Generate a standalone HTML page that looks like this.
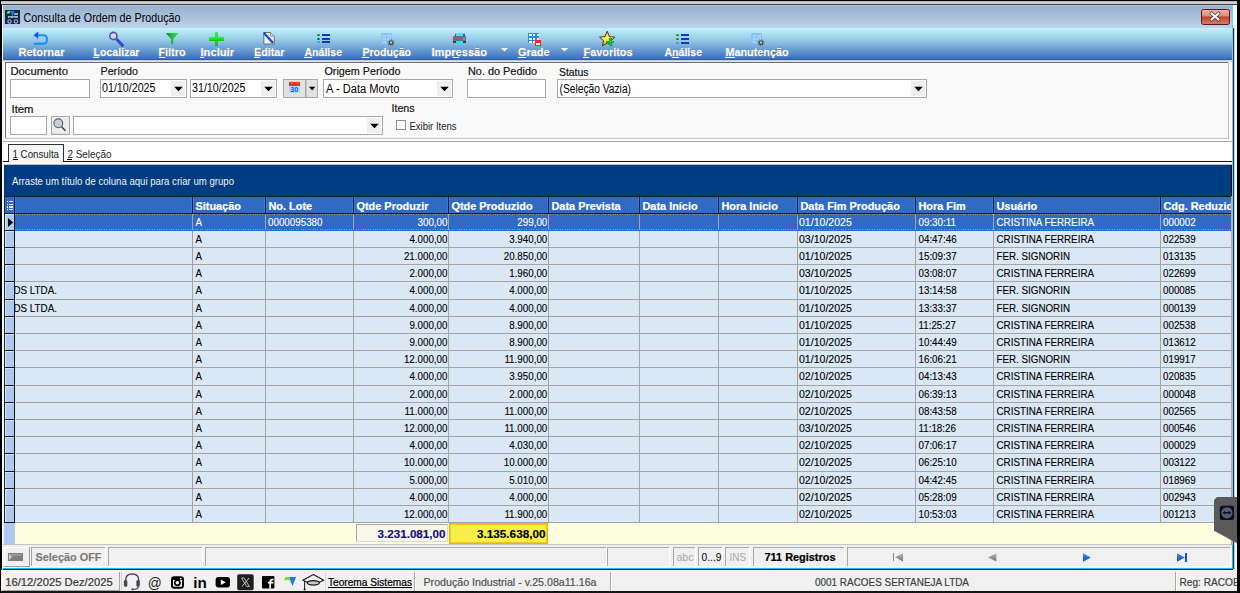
<!DOCTYPE html>
<html><head><meta charset="utf-8"><title>Consulta de Ordem de Produção</title>
<style>html,body{margin:0;padding:0;background:#000;overflow:hidden}svg{display:block}rect{shape-rendering:crispEdges}rect[rx]{shape-rendering:auto}text{font-family:"Liberation Sans",sans-serif;white-space:pre}</style>
</head><body><svg width="1240" height="593" viewBox="0 0 1240 593">
<defs><linearGradient id="gTitle" x1="0" y1="0" x2="0" y2="1"><stop offset="0" stop-color="#95afcd"/><stop offset="1" stop-color="#bed2ea"/></linearGradient><linearGradient id="gTool" x1="0" y1="0" x2="0" y2="1"><stop offset="0" stop-color="#c2f2fc"/><stop offset="0.4" stop-color="#94c8e6"/><stop offset="1" stop-color="#3a70be"/></linearGradient><linearGradient id="gClose" x1="0" y1="0" x2="0" y2="1"><stop offset="0" stop-color="#eeb4a4"/><stop offset="0.42" stop-color="#de8c76"/><stop offset="0.5" stop-color="#c2442c"/><stop offset="1" stop-color="#dc7e66"/></linearGradient><linearGradient id="gPlus" x1="0" y1="0" x2="0" y2="1"><stop offset="0" stop-color="#30f050"/><stop offset="1" stop-color="#10c020"/></linearGradient><linearGradient id="gFun" x1="0" y1="0" x2="1" y2="0"><stop offset="0" stop-color="#0c9030"/><stop offset="1" stop-color="#40e850"/></linearGradient><linearGradient id="gStar" x1="0" y1="0" x2="0" y2="1"><stop offset="0" stop-color="#f8c020"/><stop offset="0.5" stop-color="#fff060"/><stop offset="1" stop-color="#f0b020"/></linearGradient><linearGradient id="gNavG" x1="0" y1="0" x2="0" y2="1"><stop offset="0" stop-color="#b8b8b8"/><stop offset="1" stop-color="#707070"/></linearGradient><linearGradient id="gNavB" x1="0" y1="0" x2="0" y2="1"><stop offset="0" stop-color="#4a90f0"/><stop offset="1" stop-color="#0a48c8"/></linearGradient><filter id="sh" x="-5%" y="-40%" width="110%" height="180%"><feMorphology in="SourceAlpha" operator="dilate" radius="0.6"/><feGaussianBlur stdDeviation="0.5"/><feComponentTransfer><feFuncA type="linear" slope="0.55"/></feComponentTransfer><feFlood flood-color="#0a2860"/><feComposite operator="in" in2="SourceAlpha"/></filter></defs>
<rect x="0" y="0" width="1240" height="593" fill="#000"/>
<rect x="1" y="1" width="1236" height="3" fill="#cfcfcf"/>
<rect x="1" y="1" width="1236" height="1" fill="#b8b8b8"/>
<rect x="1" y="4" width="1236" height="1" fill="#3c3c3c"/>
<rect x="2" y="5" width="1" height="565" fill="#f2f8fc"/>
<rect x="1233" y="5" width="4" height="565" fill="#f8f8f8"/>
<rect x="1234" y="28" width="1" height="541" fill="#d0c8c8"/>
<rect x="1232" y="5" width="1" height="564" fill="#70d0f4"/>
<rect x="1233" y="28" width="1" height="541" fill="#183848"/>
<rect x="3" y="5" width="1229" height="23" fill="url(#gTitle)"/>
<rect x="3" y="5" width="1229" height="1" fill="#b4c8dc"/>
<rect x="5" y="10" width="15" height="14" fill="#0a2a50"/>
<path d="M6.3 13.4 L7.9 10.9 L11 10.9 L9.4 13.4 Z" fill="#8ee020"/>
<path d="M10.2 11 L14.6 11 L12.3 16.9 L11.4 13.6 Z" fill="#1a7ae0"/>
<rect x="14" y="13" width="4" height="2" fill="#9aa6b2"/>
<rect x="8" y="16" width="10" height="2" fill="#a4aebb"/>
<rect x="9" y="17" width="2" height="1" fill="#6a7888"/>
<rect x="13" y="17" width="2" height="1" fill="#6a7888"/>
<circle cx="9.5" cy="21.4" r="1.7" fill="none" stroke="#a8b2bc" stroke-width="1.1"/>
<circle cx="16" cy="21.4" r="1.7" fill="none" stroke="#a8b2bc" stroke-width="1.1"/>
<text x="23.5" y="22" font-size="12" fill="#000" textLength="157.0" lengthAdjust="spacingAndGlyphs">Consulta de Ordem de Produção</text>
<rect x="1201.5" y="9.5" width="28" height="15" rx="2" fill="url(#gClose)" stroke="#5a1a1a"/>
<path d="M1211.5 13.5 L1218.5 19.5 M1218.5 13.5 L1211.5 19.5" stroke="#404040" stroke-width="3.6" stroke-linecap="round"/>
<path d="M1211.5 13.5 L1218.5 19.5 M1218.5 13.5 L1211.5 19.5" stroke="#f4f4f4" stroke-width="2.2" stroke-linecap="round"/>
<rect x="3" y="28" width="1229" height="31" fill="url(#gTool)"/>
<rect x="3" y="59" width="1229" height="1" fill="#2a5eae"/>
<rect x="3" y="60" width="1229" height="1" fill="#c4d2e4"/>
<rect x="3" y="61" width="1229" height="1" fill="#e2ded6"/>
<g filter="url(#sh)">
<text x="18.5" y="56" font-size="10" fill="#000" font-weight="bold" textLength="46.0" lengthAdjust="spacingAndGlyphs" stroke="#000" stroke-width="0.4">Retornar</text>
</g>
<text x="18.5" y="56" font-size="10" fill="#fff" font-weight="bold" textLength="46.0" lengthAdjust="spacingAndGlyphs" stroke="#fff" stroke-width="0.3">Retornar</text>
<g filter="url(#sh)">
<text x="93.5" y="56" font-size="10" fill="#000" font-weight="bold" textLength="46.0" lengthAdjust="spacingAndGlyphs" stroke="#000" stroke-width="0.4">Localizar</text>
</g>
<text x="93.5" y="56" font-size="10" fill="#fff" font-weight="bold" textLength="46.0" lengthAdjust="spacingAndGlyphs" stroke="#fff" stroke-width="0.3">Localizar</text>
<rect x="93" y="57" width="6" height="1" fill="#fff"/>
<g filter="url(#sh)">
<text x="158.5" y="56" font-size="10" fill="#000" font-weight="bold" textLength="27.0" lengthAdjust="spacingAndGlyphs" stroke="#000" stroke-width="0.4">Filtro</text>
</g>
<text x="158.5" y="56" font-size="10" fill="#fff" font-weight="bold" textLength="27.0" lengthAdjust="spacingAndGlyphs" stroke="#fff" stroke-width="0.3">Filtro</text>
<rect x="158.5" y="57" width="6" height="1" fill="#fff"/>
<g filter="url(#sh)">
<text x="200.5" y="56" font-size="10" fill="#000" font-weight="bold" textLength="33.5" lengthAdjust="spacingAndGlyphs" stroke="#000" stroke-width="0.4">Incluir</text>
</g>
<text x="200.5" y="56" font-size="10" fill="#fff" font-weight="bold" textLength="33.5" lengthAdjust="spacingAndGlyphs" stroke="#fff" stroke-width="0.3">Incluir</text>
<rect x="200" y="57" width="4" height="1" fill="#fff"/>
<g filter="url(#sh)">
<text x="254" y="56" font-size="10" fill="#000" font-weight="bold" textLength="30.5" lengthAdjust="spacingAndGlyphs" stroke="#000" stroke-width="0.4">Editar</text>
</g>
<text x="254" y="56" font-size="10" fill="#fff" font-weight="bold" textLength="30.5" lengthAdjust="spacingAndGlyphs" stroke="#fff" stroke-width="0.3">Editar</text>
<rect x="253.5" y="57" width="6" height="1" fill="#fff"/>
<g filter="url(#sh)">
<text x="304.5" y="56" font-size="10" fill="#000" font-weight="bold" textLength="37.5" lengthAdjust="spacingAndGlyphs" stroke="#000" stroke-width="0.4">Análise</text>
</g>
<text x="304.5" y="56" font-size="10" fill="#fff" font-weight="bold" textLength="37.5" lengthAdjust="spacingAndGlyphs" stroke="#fff" stroke-width="0.3">Análise</text>
<rect x="304" y="57" width="8" height="1" fill="#fff"/>
<g filter="url(#sh)">
<text x="362.5" y="56" font-size="10" fill="#000" font-weight="bold" textLength="48.5" lengthAdjust="spacingAndGlyphs" stroke="#000" stroke-width="0.4">Produção</text>
</g>
<text x="362.5" y="56" font-size="10" fill="#fff" font-weight="bold" textLength="48.5" lengthAdjust="spacingAndGlyphs" stroke="#fff" stroke-width="0.3">Produção</text>
<rect x="362" y="57" width="7" height="1" fill="#fff"/>
<g filter="url(#sh)">
<text x="431.5" y="56" font-size="10" fill="#000" font-weight="bold" textLength="55.5" lengthAdjust="spacingAndGlyphs" stroke="#000" stroke-width="0.4">Impressão</text>
</g>
<text x="431.5" y="56" font-size="10" fill="#fff" font-weight="bold" textLength="55.5" lengthAdjust="spacingAndGlyphs" stroke="#fff" stroke-width="0.3">Impressão</text>
<rect x="453" y="57" width="6" height="1" fill="#fff"/>
<g filter="url(#sh)">
<text x="518" y="56" font-size="10" fill="#000" font-weight="bold" textLength="31.5" lengthAdjust="spacingAndGlyphs" stroke="#000" stroke-width="0.4">Grade</text>
</g>
<text x="518" y="56" font-size="10" fill="#fff" font-weight="bold" textLength="31.5" lengthAdjust="spacingAndGlyphs" stroke="#fff" stroke-width="0.3">Grade</text>
<rect x="517.5" y="57" width="8" height="1" fill="#fff"/>
<g filter="url(#sh)">
<text x="583.5" y="56" font-size="10" fill="#000" font-weight="bold" textLength="49.0" lengthAdjust="spacingAndGlyphs" stroke="#000" stroke-width="0.4">Favoritos</text>
</g>
<text x="583.5" y="56" font-size="10" fill="#fff" font-weight="bold" textLength="49.0" lengthAdjust="spacingAndGlyphs" stroke="#fff" stroke-width="0.3">Favoritos</text>
<rect x="583" y="57" width="6" height="1" fill="#fff"/>
<g filter="url(#sh)">
<text x="664.5" y="56" font-size="10" fill="#000" font-weight="bold" textLength="37.5" lengthAdjust="spacingAndGlyphs" stroke="#000" stroke-width="0.4">Análise</text>
</g>
<text x="664.5" y="56" font-size="10" fill="#fff" font-weight="bold" textLength="37.5" lengthAdjust="spacingAndGlyphs" stroke="#fff" stroke-width="0.3">Análise</text>
<rect x="672" y="57" width="7" height="1" fill="#fff"/>
<g filter="url(#sh)">
<text x="725.5" y="56" font-size="10" fill="#000" font-weight="bold" textLength="63.0" lengthAdjust="spacingAndGlyphs" stroke="#000" stroke-width="0.4">Manutenção</text>
</g>
<text x="725.5" y="56" font-size="10" fill="#fff" font-weight="bold" textLength="63.0" lengthAdjust="spacingAndGlyphs" stroke="#fff" stroke-width="0.3">Manutenção</text>
<rect x="725" y="57" width="10" height="1" fill="#fff"/>
<path d="M501 48 L508 48 L504.5 51.5 Z" fill="#fff"/>
<path d="M561 48 L568 48 L564.5 51.5 Z" fill="#fff"/>
<path d="M37.5 35.2 L43.3 35.2 Q47 35.2 47 39.5 Q47 43.8 43.3 43.8 L34 43.8" fill="none" stroke="#1a90f4" stroke-width="2"/>
<path d="M33.6 35.2 L38.2 31.6 L38.2 38.8 Z" fill="#0a58f0"/>
<path d="M117 39.8 L122.4 45.2" stroke="#303890" stroke-width="3" stroke-linecap="round"/>
<path d="M117 39.8 L122 44.8" stroke="#3a50e0" stroke-width="1.8" stroke-linecap="round"/>
<circle cx="113.4" cy="36" r="3.6" fill="#d4d4fa" stroke="#505890" stroke-width="1.6"/>
<path d="M165.8 33 L178.6 33 L173.2 39.3 L173.2 44.2 L171.1 44.2 L171.1 39.3 Z" fill="url(#gFun)"/>
<rect x="214.8" y="31.6" width="3.4" height="14.1" fill="url(#gPlus)"/>
<rect x="209" y="36.9" width="15" height="4.2" fill="url(#gPlus)"/>
<path d="M263.8 32.5 L270.5 32.5 L274.2 36.2 L274.2 44 L263.8 44 Z" fill="#f2f2f2" stroke="#6a6a6a" stroke-width="1"/>
<path d="M270.5 32.5 L270.5 36.2 L274.2 36.2" fill="#d0d0d0" stroke="#8a8a8a" stroke-width="0.8"/>
<path d="M264.4 33.4 L272.4 42.2" stroke="#0a40d0" stroke-width="2.2" stroke-linecap="round"/>
<path d="M265 34 L271.8 41.6" stroke="#6c9cf8" stroke-width="0.6" stroke-dasharray="1,1.2"/>
<rect x="317" y="34" width="3" height="2.2" fill="#18c050"/>
<rect x="318" y="34.5" width="1" height="1.2" fill="#065020"/>
<rect x="321.7" y="34" width="8" height="2" fill="#0c3cb0"/>
<rect x="317" y="37.8" width="3" height="2.2" fill="#18c050"/>
<rect x="318" y="38.3" width="1" height="1.2" fill="#065020"/>
<rect x="321.7" y="37.8" width="8" height="2" fill="#0c3cb0"/>
<rect x="317" y="41.4" width="3" height="2" fill="#3aa8f0"/>
<rect x="321.7" y="41.4" width="8" height="2" fill="#0c3cb0"/>
<rect x="676" y="34.2" width="3" height="2.2" fill="#18c050"/>
<rect x="677" y="34.7" width="1" height="1.2" fill="#065020"/>
<rect x="680.7" y="34.2" width="8" height="2" fill="#0c3cb0"/>
<rect x="676" y="38.0" width="3" height="2.2" fill="#18c050"/>
<rect x="677" y="38.5" width="1" height="1.2" fill="#065020"/>
<rect x="680.7" y="38.0" width="8" height="2" fill="#0c3cb0"/>
<rect x="676" y="41.6" width="3" height="2" fill="#3aa8f0"/>
<rect x="680.7" y="41.6" width="8" height="2" fill="#0c3cb0"/>
<rect x="381" y="33" width="11.3" height="10.7" fill="#8cc4f4"/>
<rect x="382.5" y="34.5" width="3.5" height="2.2" fill="#a8d4f8"/>
<rect x="387.3" y="34.5" width="3.5" height="2.2" fill="#a8d4f8"/>
<rect x="382.5" y="37.8" width="3.5" height="2" fill="#a8d4f8"/>
<rect x="387.3" y="37.8" width="3.5" height="2" fill="#a8d4f8"/>
<rect x="382.5" y="40.8" width="3.5" height="2" fill="#a8d4f8"/>
<circle cx="391" cy="42.7" r="2.5" fill="#46525c"/>
<circle cx="391" cy="42.7" r="3.1" fill="none" stroke="#56626c" stroke-width="1" stroke-dasharray="1.1,1.3"/>
<circle cx="391" cy="42.5" r="1" fill="#e0e4e8"/>
<rect x="751" y="33" width="11.3" height="10.7" fill="#8cc4f4"/>
<rect x="752.5" y="34.5" width="3.5" height="2.2" fill="#a8d4f8"/>
<rect x="757.3" y="34.5" width="3.5" height="2.2" fill="#a8d4f8"/>
<rect x="752.5" y="37.8" width="3.5" height="2" fill="#a8d4f8"/>
<rect x="757.3" y="37.8" width="3.5" height="2" fill="#a8d4f8"/>
<rect x="752.5" y="40.8" width="3.5" height="2" fill="#a8d4f8"/>
<circle cx="761" cy="42.7" r="2.5" fill="#46525c"/>
<circle cx="761" cy="42.7" r="3.1" fill="none" stroke="#56626c" stroke-width="1" stroke-dasharray="1.1,1.3"/>
<circle cx="761" cy="42.5" r="1" fill="#e0e4e8"/>
<rect x="455" y="33" width="9.5" height="3.5" fill="#40e8f8"/>
<rect x="455" y="33.5" width="1.3" height="3" fill="#0a60e0"/>
<rect x="463.2" y="33.5" width="1.3" height="3" fill="#0a60e0"/>
<rect x="453" y="36.2" width="13" height="6.4" fill="#6a7078"/>
<rect x="453" y="41.2" width="13" height="1.5" fill="#4a3a38"/>
<rect x="463" y="38" width="1.6" height="1.6" fill="#30b8f8"/>
<rect x="455.7" y="40.5" width="7.5" height="3.5" fill="#30e0f8"/>
<rect x="528" y="33" width="11" height="10.3" fill="#2a88e0"/>
<rect x="529.3" y="34.3" width="2.4" height="2" fill="#f8fcff"/>
<rect x="529.3" y="37.6" width="2.4" height="2" fill="#f8fcff"/>
<rect x="529.3" y="40.9" width="2.4" height="2" fill="#f8fcff"/>
<rect x="533" y="34.3" width="2.4" height="2" fill="#f8fcff"/>
<rect x="533" y="37.6" width="2.4" height="2" fill="#f8fcff"/>
<rect x="533" y="40.9" width="2.4" height="2" fill="#f8fcff"/>
<rect x="536.6" y="34.3" width="2.4" height="2" fill="#f8fcff"/>
<rect x="536.6" y="37.6" width="2.4" height="2" fill="#f8fcff"/>
<rect x="536.6" y="40.9" width="2.4" height="2" fill="#f8fcff"/>
<rect x="535.2" y="40.2" width="5.8" height="5.6" fill="#f02818"/>
<rect x="536.3" y="42.5" width="3.6" height="2" fill="#ffffff"/>
<path d="M607.2 31.2 L609.4 36.6 L614.8 37.2 L610.8 40.8 L612 45.8 L607.2 43 L602.4 45.8 L603.6 40.8 L599.6 37.2 L605 36.6 Z" fill="url(#gStar)" stroke="#3a2000" stroke-width="0.9" stroke-linejoin="round"/>
<rect x="606.2" y="40.6" width="8" height="2.6" fill="#18b030"/>
<rect x="608.9" y="38" width="2.6" height="7.6" fill="#18b030"/>
<rect x="609.5" y="41" width="1.4" height="1.4" fill="#60f070"/>
<rect x="3" y="62" width="1229" height="79" fill="#ffffff"/>
<rect x="3" y="62" width="2" height="79" fill="#f4f4f4"/>
<rect x="5" y="62" width="1224" height="77" fill="#f9f9f9"/>
<rect x="5" y="62" width="1224" height="1" fill="#6e6e6e"/>
<rect x="5" y="62" width="1" height="77" fill="#6e6e6e"/>
<rect x="5" y="138" width="1224" height="1" fill="#c0c0c0"/>
<rect x="1228" y="62" width="1" height="77" fill="#c0c0c0"/>
<rect x="6" y="63" width="1222" height="1" fill="#ffffff"/>
<rect x="6" y="63" width="1" height="75" fill="#ffffff"/>
<rect x="3" y="141" width="1229" height="1" fill="#a8a8a8"/>
<text x="10.5" y="75" font-size="10.6" fill="#141414" textLength="57.5" lengthAdjust="spacingAndGlyphs" stroke="#141414" stroke-width="0.2">Documento</text>
<rect x="10" y="79" width="80" height="19" fill="#fff"/>
<rect x="10" y="79" width="80" height="1" fill="#a8a8a8"/>
<rect x="10" y="79" width="1" height="19" fill="#a8a8a8"/>
<rect x="10" y="97" width="80" height="1" fill="#a8a8a8"/>
<rect x="89" y="79" width="1" height="19" fill="#a8a8a8"/>
<text x="100.5" y="75" font-size="10.6" fill="#141414" textLength="37.5" lengthAdjust="spacingAndGlyphs" stroke="#141414" stroke-width="0.2">Período</text>
<rect x="100" y="79" width="87" height="19" fill="#fff"/>
<rect x="100" y="79" width="87" height="1" fill="#a8a8a8"/>
<rect x="100" y="79" width="1" height="19" fill="#a8a8a8"/>
<rect x="100" y="97" width="87" height="1" fill="#a8a8a8"/>
<rect x="186" y="79" width="1" height="19" fill="#a8a8a8"/>
<rect x="171" y="81" width="14" height="15" fill="#efefef"/>
<path d="M174.2 86.7 L182.8 86.7 L178.5 91.3 Z" fill="#000"/>
<text x="102" y="91.5" font-size="12" fill="#000" textLength="53.5" lengthAdjust="spacingAndGlyphs">01/10/2025</text>
<rect x="190" y="79" width="87" height="19" fill="#fff"/>
<rect x="190" y="79" width="87" height="1" fill="#a8a8a8"/>
<rect x="190" y="79" width="1" height="19" fill="#a8a8a8"/>
<rect x="190" y="97" width="87" height="1" fill="#a8a8a8"/>
<rect x="276" y="79" width="1" height="19" fill="#a8a8a8"/>
<rect x="261" y="81" width="14" height="15" fill="#efefef"/>
<path d="M264.2 86.7 L272.8 86.7 L268.5 91.3 Z" fill="#000"/>
<text x="192" y="91.5" font-size="12" fill="#000" textLength="53.5" lengthAdjust="spacingAndGlyphs">31/10/2025</text>
<rect x="283" y="79" width="35" height="19" fill="#e2e2e2"/>
<rect x="283" y="79" width="35" height="1" fill="#a8a8a8"/>
<rect x="283" y="79" width="1" height="19" fill="#a8a8a8"/>
<rect x="283" y="97" width="35" height="1" fill="#a8a8a8"/>
<rect x="317" y="79" width="1" height="19" fill="#a8a8a8"/>
<rect x="305" y="79" width="1" height="19" fill="#a8a8a8"/>
<rect x="306" y="80" width="1" height="17" fill="#c8c8c8"/>
<rect x="288.8" y="82" width="11" height="3.8" fill="#f03020"/>
<rect x="289" y="85.8" width="11" height="7" fill="#a8dcfa"/>
<rect x="291" y="81" width="1" height="2.5" fill="#80a0c0"/>
<rect x="296.5" y="81" width="1" height="2.5" fill="#80a0c0"/>
<text x="290.3" y="92" font-size="7" fill="#1a60d0" font-weight="bold" textLength="8.0" lengthAdjust="spacingAndGlyphs">30</text>
<path d="M308.9 86.7 L315.3 86.7 L312.1 90.5 Z" fill="#000"/>
<text x="324.5" y="75" font-size="10.6" fill="#141414" textLength="76.0" lengthAdjust="spacingAndGlyphs" stroke="#141414" stroke-width="0.2">Origem Período</text>
<rect x="323" y="79" width="130" height="19" fill="#fff"/>
<rect x="323" y="79" width="130" height="1" fill="#a8a8a8"/>
<rect x="323" y="79" width="1" height="19" fill="#a8a8a8"/>
<rect x="323" y="97" width="130" height="1" fill="#a8a8a8"/>
<rect x="452" y="79" width="1" height="19" fill="#a8a8a8"/>
<rect x="437" y="81" width="14" height="15" fill="#efefef"/>
<path d="M440.2 86.7 L448.8 86.7 L444.5 91.3 Z" fill="#000"/>
<text x="326" y="92.5" font-size="12" fill="#000" textLength="73.5" lengthAdjust="spacingAndGlyphs">A - Data Movto</text>
<text x="468" y="75" font-size="10.6" fill="#141414" textLength="69.0" lengthAdjust="spacingAndGlyphs" stroke="#141414" stroke-width="0.2">No. do Pedido</text>
<rect x="467" y="79" width="79" height="19" fill="#fff"/>
<rect x="467" y="79" width="79" height="1" fill="#a8a8a8"/>
<rect x="467" y="79" width="1" height="19" fill="#a8a8a8"/>
<rect x="467" y="97" width="79" height="1" fill="#a8a8a8"/>
<rect x="545" y="79" width="1" height="19" fill="#a8a8a8"/>
<text x="559" y="76" font-size="10.6" fill="#141414" textLength="29.5" lengthAdjust="spacingAndGlyphs" stroke="#141414" stroke-width="0.2">Status</text>
<rect x="557" y="79" width="370" height="19" fill="#fff"/>
<rect x="557" y="79" width="370" height="1" fill="#a8a8a8"/>
<rect x="557" y="79" width="1" height="19" fill="#a8a8a8"/>
<rect x="557" y="97" width="370" height="1" fill="#a8a8a8"/>
<rect x="926" y="79" width="1" height="19" fill="#a8a8a8"/>
<rect x="911" y="81" width="14" height="15" fill="#efefef"/>
<path d="M914.2 86.7 L922.8 86.7 L918.5 91.3 Z" fill="#000"/>
<text x="559.5" y="92.5" font-size="12" fill="#000" textLength="71.5" lengthAdjust="spacingAndGlyphs">(Seleção Vazia)</text>
<text x="11.5" y="113" font-size="10.6" fill="#141414" textLength="22.0" lengthAdjust="spacingAndGlyphs" stroke="#141414" stroke-width="0.2">Item</text>
<rect x="10" y="116" width="37" height="19" fill="#fff"/>
<rect x="10" y="116" width="37" height="1" fill="#a8a8a8"/>
<rect x="10" y="116" width="1" height="19" fill="#a8a8a8"/>
<rect x="10" y="134" width="37" height="1" fill="#a8a8a8"/>
<rect x="46" y="116" width="1" height="19" fill="#a8a8a8"/>
<rect x="51" y="116" width="19" height="19" fill="#ececec"/>
<rect x="51" y="116" width="19" height="1" fill="#a8a8a8"/>
<rect x="51" y="116" width="1" height="19" fill="#a8a8a8"/>
<rect x="51" y="134" width="19" height="1" fill="#a8a8a8"/>
<rect x="69" y="116" width="1" height="19" fill="#a8a8a8"/>
<rect x="52" y="133" width="17" height="1" fill="#dcdcdc"/>
<path d="M61.6 126.8 L65 130.4" stroke="#46505a" stroke-width="1.6" stroke-linecap="round"/>
<circle cx="58.3" cy="123.3" r="4.4" fill="#c4d2d8" stroke="#5a646c" stroke-width="1.1"/>
<rect x="73" y="116" width="310" height="19" fill="#fff"/>
<rect x="73" y="116" width="310" height="1" fill="#a8a8a8"/>
<rect x="73" y="116" width="1" height="19" fill="#a8a8a8"/>
<rect x="73" y="134" width="310" height="1" fill="#a8a8a8"/>
<rect x="382" y="116" width="1" height="19" fill="#a8a8a8"/>
<rect x="367" y="118" width="14" height="15" fill="#efefef"/>
<path d="M370.2 123.7 L378.8 123.7 L374.5 128.3 Z" fill="#000"/>
<text x="391.5" y="112" font-size="10.6" fill="#141414" textLength="23.0" lengthAdjust="spacingAndGlyphs" stroke="#141414" stroke-width="0.2">Itens</text>
<rect x="396" y="120" width="10" height="10" fill="#fff"/>
<rect x="396" y="120" width="10" height="1" fill="#8e8e8e"/>
<rect x="396" y="120" width="1" height="10" fill="#8e8e8e"/>
<rect x="396" y="129" width="10" height="1" fill="#8e8e8e"/>
<rect x="405" y="120" width="1" height="10" fill="#8e8e8e"/>
<text x="409.5" y="130" font-size="11" fill="#202020" textLength="47.0" lengthAdjust="spacingAndGlyphs">Exibir Itens</text>
<rect x="3" y="142" width="1229" height="22" fill="#ffffff"/>
<rect x="3" y="161" width="1229" height="1" fill="#101010"/>
<rect x="9" y="145" width="54" height="17" fill="#f6f6f6"/>
<rect x="8" y="144" width="56" height="1" fill="#303030"/>
<rect x="8" y="144" width="1" height="17" fill="#303030"/>
<rect x="63" y="144" width="1" height="17" fill="#303030"/>
<text x="12.5" y="157.5" font-size="11" fill="#222" textLength="46.5" lengthAdjust="spacingAndGlyphs">1 Consulta</text>
<rect x="12.5" y="158.5" width="5" height="1.2" fill="#000"/>
<text x="67.5" y="157.5" font-size="11" fill="#222" textLength="44.0" lengthAdjust="spacingAndGlyphs">2 Seleção</text>
<rect x="67" y="158.5" width="5" height="1.2" fill="#000"/>
<rect x="3" y="162" width="1229" height="2" fill="#ffffff"/>
<rect x="3" y="164" width="1229" height="1" fill="#c8c0b8"/>
<rect x="4" y="165" width="1227" height="31" fill="#003c82"/>
<text x="12" y="185" font-size="11" fill="#f4f4f4" textLength="222.0" lengthAdjust="spacingAndGlyphs">Arraste um título de coluna aqui para criar um grupo</text>
<rect x="3" y="162" width="1" height="383" fill="#eef4fa"/>
<rect x="4" y="196" width="1" height="327" fill="#2a2218"/>
<rect x="5" y="197" width="1226" height="16" fill="#316ac5"/>
<rect x="5" y="196" width="1226" height="1" fill="#0a1a38"/>
<rect x="5" y="213" width="1226" height="1" fill="#0a1a38"/>
<rect x="14" y="197" width="1" height="16" fill="#0a1a38"/>
<rect x="13" y="197" width="1" height="16" fill="#3a78d8"/>
<rect x="15" y="197" width="1" height="16" fill="#3a78d8"/>
<rect x="192" y="197" width="1" height="16" fill="#0a1a38"/>
<rect x="191" y="197" width="1" height="16" fill="#3a78d8"/>
<rect x="193" y="197" width="1" height="16" fill="#3a78d8"/>
<rect x="265" y="197" width="1" height="16" fill="#0a1a38"/>
<rect x="264" y="197" width="1" height="16" fill="#3a78d8"/>
<rect x="266" y="197" width="1" height="16" fill="#3a78d8"/>
<rect x="353" y="197" width="1" height="16" fill="#0a1a38"/>
<rect x="352" y="197" width="1" height="16" fill="#3a78d8"/>
<rect x="354" y="197" width="1" height="16" fill="#3a78d8"/>
<rect x="448" y="197" width="1" height="16" fill="#0a1a38"/>
<rect x="447" y="197" width="1" height="16" fill="#3a78d8"/>
<rect x="449" y="197" width="1" height="16" fill="#3a78d8"/>
<rect x="548" y="197" width="1" height="16" fill="#0a1a38"/>
<rect x="547" y="197" width="1" height="16" fill="#3a78d8"/>
<rect x="549" y="197" width="1" height="16" fill="#3a78d8"/>
<rect x="639" y="197" width="1" height="16" fill="#0a1a38"/>
<rect x="638" y="197" width="1" height="16" fill="#3a78d8"/>
<rect x="640" y="197" width="1" height="16" fill="#3a78d8"/>
<rect x="718" y="197" width="1" height="16" fill="#0a1a38"/>
<rect x="717" y="197" width="1" height="16" fill="#3a78d8"/>
<rect x="719" y="197" width="1" height="16" fill="#3a78d8"/>
<rect x="797" y="197" width="1" height="16" fill="#0a1a38"/>
<rect x="796" y="197" width="1" height="16" fill="#3a78d8"/>
<rect x="798" y="197" width="1" height="16" fill="#3a78d8"/>
<rect x="915" y="197" width="1" height="16" fill="#0a1a38"/>
<rect x="914" y="197" width="1" height="16" fill="#3a78d8"/>
<rect x="916" y="197" width="1" height="16" fill="#3a78d8"/>
<rect x="993" y="197" width="1" height="16" fill="#0a1a38"/>
<rect x="992" y="197" width="1" height="16" fill="#3a78d8"/>
<rect x="994" y="197" width="1" height="16" fill="#3a78d8"/>
<rect x="1160" y="197" width="1" height="16" fill="#0a1a38"/>
<rect x="1159" y="197" width="1" height="16" fill="#3a78d8"/>
<rect x="1161" y="197" width="1" height="16" fill="#3a78d8"/>
<rect x="7" y="201.0" width="1.4" height="1.4" fill="#e0ecff"/>
<rect x="9" y="201.0" width="4" height="1.4" fill="#e0ecff"/>
<rect x="7" y="203.6" width="1.4" height="1.4" fill="#e0ecff"/>
<rect x="9" y="203.6" width="4" height="1.4" fill="#e0ecff"/>
<rect x="7" y="206.2" width="1.4" height="1.4" fill="#e0ecff"/>
<rect x="9" y="206.2" width="4" height="1.4" fill="#e0ecff"/>
<rect x="7" y="208.5" width="1.4" height="1.4" fill="#e0ecff"/>
<rect x="9" y="208.5" width="4" height="1.4" fill="#e0ecff"/>
<clipPath id="c15"><rect x="15" y="150" width="200" height="400"/></clipPath>
<clipPath id="gclip"><rect x="5" y="150" width="1226" height="400"/></clipPath>
<g clip-path="url(#gclip)">
<text x="195.5" y="210" font-size="11" fill="#fff" font-weight="bold" textLength="45.4" lengthAdjust="spacingAndGlyphs" stroke="#fff" stroke-width="0.2">Situação</text>
<text x="268.5" y="210" font-size="11" fill="#fff" font-weight="bold" textLength="43.6" lengthAdjust="spacingAndGlyphs" stroke="#fff" stroke-width="0.2">No. Lote</text>
<text x="356.5" y="210" font-size="11" fill="#fff" font-weight="bold" textLength="72.1" lengthAdjust="spacingAndGlyphs" stroke="#fff" stroke-width="0.2">Qtde Produzir</text>
<text x="451.5" y="210" font-size="11" fill="#fff" font-weight="bold" textLength="81.1" lengthAdjust="spacingAndGlyphs" stroke="#fff" stroke-width="0.2">Qtde Produzido</text>
<text x="551.5" y="210" font-size="11" fill="#fff" font-weight="bold" textLength="69.1" lengthAdjust="spacingAndGlyphs" stroke="#fff" stroke-width="0.2">Data Prevista</text>
<text x="642.5" y="210" font-size="11" fill="#fff" font-weight="bold" textLength="55.1" lengthAdjust="spacingAndGlyphs" stroke="#fff" stroke-width="0.2">Data Início</text>
<text x="721.5" y="210" font-size="11" fill="#fff" font-weight="bold" textLength="56.3" lengthAdjust="spacingAndGlyphs" stroke="#fff" stroke-width="0.2">Hora Início</text>
<text x="800.5" y="210" font-size="11" fill="#fff" font-weight="bold" textLength="99.3" lengthAdjust="spacingAndGlyphs" stroke="#fff" stroke-width="0.2">Data Fim Produção</text>
<text x="918.5" y="210" font-size="11" fill="#fff" font-weight="bold" textLength="47.2" lengthAdjust="spacingAndGlyphs" stroke="#fff" stroke-width="0.2">Hora Fim</text>
<text x="996.5" y="210" font-size="11" fill="#fff" font-weight="bold" textLength="40.6" lengthAdjust="spacingAndGlyphs" stroke="#fff" stroke-width="0.2">Usuário</text>
<text x="1163.5" y="210" font-size="11" fill="#fff" font-weight="bold" textLength="76.3" lengthAdjust="spacingAndGlyphs" stroke="#fff" stroke-width="0.2">Cdg. Reduzido</text>
</g>
<rect x="15" y="214" width="1216" height="17" fill="#316ac5"/>
<rect x="5" y="214" width="9" height="16" fill="#aecaf0"/>
<rect x="5" y="214" width="9" height="1" fill="#d4e4fa"/>
<rect x="5" y="214" width="1" height="16" fill="#d4e4fa"/>
<rect x="5" y="230" width="9" height="1" fill="#141414"/>
<rect x="14" y="214" width="1" height="17" fill="#141414"/>
<rect x="192" y="214" width="1" height="16" fill="#a4a4a4"/>
<rect x="265" y="214" width="1" height="16" fill="#a4a4a4"/>
<rect x="353" y="214" width="1" height="16" fill="#a4a4a4"/>
<rect x="448" y="214" width="1" height="16" fill="#a4a4a4"/>
<rect x="548" y="214" width="1" height="16" fill="#a4a4a4"/>
<rect x="639" y="214" width="1" height="16" fill="#a4a4a4"/>
<rect x="718" y="214" width="1" height="16" fill="#a4a4a4"/>
<rect x="797" y="214" width="1" height="16" fill="#a4a4a4"/>
<rect x="915" y="214" width="1" height="16" fill="#a4a4a4"/>
<rect x="993" y="214" width="1" height="16" fill="#a4a4a4"/>
<rect x="1160" y="214" width="1" height="16" fill="#a4a4a4"/>
<path d="M8 218 L13 222.5 L8 227 Z" fill="#000"/>
<line x1="15" y1="214.5" x2="1231" y2="214.5" stroke="#c89038" stroke-width="1" stroke-dasharray="1,1.4" shape-rendering="crispEdges"/>
<line x1="15" y1="229.5" x2="1231" y2="229.5" stroke="#c89038" stroke-width="1" stroke-dasharray="1,1.4" shape-rendering="crispEdges"/>
<text x="195.5" y="226" font-size="11" fill="#fff" textLength="6.5" lengthAdjust="spacingAndGlyphs" stroke="#fff" stroke-width="0.12">A</text>
<text x="268" y="226" font-size="11" fill="#fff" textLength="54.5" lengthAdjust="spacingAndGlyphs" stroke="#fff" stroke-width="0.12">0000095380</text>
<text x="447.5" y="226" font-size="11" fill="#fff" text-anchor="end" textLength="30.0" lengthAdjust="spacingAndGlyphs" stroke="#fff" stroke-width="0.12">300,00</text>
<text x="547.3" y="226" font-size="11" fill="#fff" text-anchor="end" textLength="30.0" lengthAdjust="spacingAndGlyphs" stroke="#fff" stroke-width="0.12">299,00</text>
<text x="799" y="226" font-size="11" fill="#fff" textLength="52.8" lengthAdjust="spacingAndGlyphs" stroke="#fff" stroke-width="0.12">01/10/2025</text>
<text x="918.5" y="226" font-size="11" fill="#fff" textLength="37.4" lengthAdjust="spacingAndGlyphs" stroke="#fff" stroke-width="0.12">09:30:11</text>
<text x="996.5" y="226" font-size="11" fill="#fff" textLength="97.5" lengthAdjust="spacingAndGlyphs" stroke="#fff" stroke-width="0.12">CRISTINA FERREIRA</text>
<text x="1163" y="226" font-size="11" fill="#fff" textLength="32.7" lengthAdjust="spacingAndGlyphs" stroke="#fff" stroke-width="0.12">000002</text>
<rect x="15" y="231" width="1216" height="17" fill="#dae8f5"/>
<rect x="5" y="231" width="9" height="16" fill="#aecaf0"/>
<rect x="5" y="231" width="9" height="1" fill="#d4e4fa"/>
<rect x="5" y="231" width="1" height="16" fill="#d4e4fa"/>
<rect x="5" y="247" width="9" height="1" fill="#141414"/>
<rect x="14" y="231" width="1" height="17" fill="#141414"/>
<rect x="15" y="247" width="1216" height="1" fill="#a4a4a4"/>
<rect x="192" y="231" width="1" height="16" fill="#a4a4a4"/>
<rect x="265" y="231" width="1" height="16" fill="#a4a4a4"/>
<rect x="353" y="231" width="1" height="16" fill="#a4a4a4"/>
<rect x="448" y="231" width="1" height="16" fill="#a4a4a4"/>
<rect x="548" y="231" width="1" height="16" fill="#a4a4a4"/>
<rect x="639" y="231" width="1" height="16" fill="#a4a4a4"/>
<rect x="718" y="231" width="1" height="16" fill="#a4a4a4"/>
<rect x="797" y="231" width="1" height="16" fill="#a4a4a4"/>
<rect x="915" y="231" width="1" height="16" fill="#a4a4a4"/>
<rect x="993" y="231" width="1" height="16" fill="#a4a4a4"/>
<rect x="1160" y="231" width="1" height="16" fill="#a4a4a4"/>
<text x="195.5" y="243" font-size="11" fill="#000" textLength="6.5" lengthAdjust="spacingAndGlyphs" stroke="#000" stroke-width="0.12">A</text>
<text x="447.5" y="243" font-size="11" fill="#000" text-anchor="end" textLength="38.1" lengthAdjust="spacingAndGlyphs" stroke="#000" stroke-width="0.12">4.000,00</text>
<text x="547.3" y="243" font-size="11" fill="#000" text-anchor="end" textLength="38.1" lengthAdjust="spacingAndGlyphs" stroke="#000" stroke-width="0.12">3.940,00</text>
<text x="799" y="243" font-size="11" fill="#000" textLength="52.8" lengthAdjust="spacingAndGlyphs" stroke="#000" stroke-width="0.12">03/10/2025</text>
<text x="918.5" y="243" font-size="11" fill="#000" textLength="38.1" lengthAdjust="spacingAndGlyphs" stroke="#000" stroke-width="0.12">04:47:46</text>
<text x="996.5" y="243" font-size="11" fill="#000" textLength="97.5" lengthAdjust="spacingAndGlyphs" stroke="#000" stroke-width="0.12">CRISTINA FERREIRA</text>
<text x="1163" y="243" font-size="11" fill="#000" textLength="32.7" lengthAdjust="spacingAndGlyphs" stroke="#000" stroke-width="0.12">022539</text>
<rect x="15" y="248" width="1216" height="17" fill="#dae8f5"/>
<rect x="5" y="248" width="9" height="16" fill="#aecaf0"/>
<rect x="5" y="248" width="9" height="1" fill="#d4e4fa"/>
<rect x="5" y="248" width="1" height="16" fill="#d4e4fa"/>
<rect x="5" y="264" width="9" height="1" fill="#141414"/>
<rect x="14" y="248" width="1" height="17" fill="#141414"/>
<rect x="15" y="264" width="1216" height="1" fill="#a4a4a4"/>
<rect x="192" y="248" width="1" height="16" fill="#a4a4a4"/>
<rect x="265" y="248" width="1" height="16" fill="#a4a4a4"/>
<rect x="353" y="248" width="1" height="16" fill="#a4a4a4"/>
<rect x="448" y="248" width="1" height="16" fill="#a4a4a4"/>
<rect x="548" y="248" width="1" height="16" fill="#a4a4a4"/>
<rect x="639" y="248" width="1" height="16" fill="#a4a4a4"/>
<rect x="718" y="248" width="1" height="16" fill="#a4a4a4"/>
<rect x="797" y="248" width="1" height="16" fill="#a4a4a4"/>
<rect x="915" y="248" width="1" height="16" fill="#a4a4a4"/>
<rect x="993" y="248" width="1" height="16" fill="#a4a4a4"/>
<rect x="1160" y="248" width="1" height="16" fill="#a4a4a4"/>
<text x="195.5" y="260" font-size="11" fill="#000" textLength="6.5" lengthAdjust="spacingAndGlyphs" stroke="#000" stroke-width="0.12">A</text>
<text x="447.5" y="260" font-size="11" fill="#000" text-anchor="end" textLength="43.6" lengthAdjust="spacingAndGlyphs" stroke="#000" stroke-width="0.12">21.000,00</text>
<text x="547.3" y="260" font-size="11" fill="#000" text-anchor="end" textLength="43.6" lengthAdjust="spacingAndGlyphs" stroke="#000" stroke-width="0.12">20.850,00</text>
<text x="799" y="260" font-size="11" fill="#000" textLength="52.8" lengthAdjust="spacingAndGlyphs" stroke="#000" stroke-width="0.12">01/10/2025</text>
<text x="918.5" y="260" font-size="11" fill="#000" textLength="38.1" lengthAdjust="spacingAndGlyphs" stroke="#000" stroke-width="0.12">15:09:37</text>
<text x="996.5" y="260" font-size="11" fill="#000" textLength="73.5" lengthAdjust="spacingAndGlyphs" stroke="#000" stroke-width="0.12">FER. SIGNORIN</text>
<text x="1163" y="260" font-size="11" fill="#000" textLength="32.7" lengthAdjust="spacingAndGlyphs" stroke="#000" stroke-width="0.12">013135</text>
<rect x="15" y="265" width="1216" height="17" fill="#dae8f5"/>
<rect x="5" y="265" width="9" height="16" fill="#aecaf0"/>
<rect x="5" y="265" width="9" height="1" fill="#d4e4fa"/>
<rect x="5" y="265" width="1" height="16" fill="#d4e4fa"/>
<rect x="5" y="281" width="9" height="1" fill="#141414"/>
<rect x="14" y="265" width="1" height="17" fill="#141414"/>
<rect x="15" y="281" width="1216" height="1" fill="#a4a4a4"/>
<rect x="192" y="265" width="1" height="16" fill="#a4a4a4"/>
<rect x="265" y="265" width="1" height="16" fill="#a4a4a4"/>
<rect x="353" y="265" width="1" height="16" fill="#a4a4a4"/>
<rect x="448" y="265" width="1" height="16" fill="#a4a4a4"/>
<rect x="548" y="265" width="1" height="16" fill="#a4a4a4"/>
<rect x="639" y="265" width="1" height="16" fill="#a4a4a4"/>
<rect x="718" y="265" width="1" height="16" fill="#a4a4a4"/>
<rect x="797" y="265" width="1" height="16" fill="#a4a4a4"/>
<rect x="915" y="265" width="1" height="16" fill="#a4a4a4"/>
<rect x="993" y="265" width="1" height="16" fill="#a4a4a4"/>
<rect x="1160" y="265" width="1" height="16" fill="#a4a4a4"/>
<text x="195.5" y="277" font-size="11" fill="#000" textLength="6.5" lengthAdjust="spacingAndGlyphs" stroke="#000" stroke-width="0.12">A</text>
<text x="447.5" y="277" font-size="11" fill="#000" text-anchor="end" textLength="38.1" lengthAdjust="spacingAndGlyphs" stroke="#000" stroke-width="0.12">2.000,00</text>
<text x="547.3" y="277" font-size="11" fill="#000" text-anchor="end" textLength="38.1" lengthAdjust="spacingAndGlyphs" stroke="#000" stroke-width="0.12">1.960,00</text>
<text x="799" y="277" font-size="11" fill="#000" textLength="52.8" lengthAdjust="spacingAndGlyphs" stroke="#000" stroke-width="0.12">03/10/2025</text>
<text x="918.5" y="277" font-size="11" fill="#000" textLength="38.1" lengthAdjust="spacingAndGlyphs" stroke="#000" stroke-width="0.12">03:08:07</text>
<text x="996.5" y="277" font-size="11" fill="#000" textLength="97.5" lengthAdjust="spacingAndGlyphs" stroke="#000" stroke-width="0.12">CRISTINA FERREIRA</text>
<text x="1163" y="277" font-size="11" fill="#000" textLength="32.7" lengthAdjust="spacingAndGlyphs" stroke="#000" stroke-width="0.12">022699</text>
<rect x="15" y="282" width="1216" height="18" fill="#dae8f5"/>
<rect x="5" y="282" width="9" height="17" fill="#aecaf0"/>
<rect x="5" y="282" width="9" height="1" fill="#d4e4fa"/>
<rect x="5" y="282" width="1" height="17" fill="#d4e4fa"/>
<rect x="5" y="299" width="9" height="1" fill="#141414"/>
<rect x="14" y="282" width="1" height="18" fill="#141414"/>
<rect x="15" y="299" width="1216" height="1" fill="#a4a4a4"/>
<rect x="192" y="282" width="1" height="17" fill="#a4a4a4"/>
<rect x="265" y="282" width="1" height="17" fill="#a4a4a4"/>
<rect x="353" y="282" width="1" height="17" fill="#a4a4a4"/>
<rect x="448" y="282" width="1" height="17" fill="#a4a4a4"/>
<rect x="548" y="282" width="1" height="17" fill="#a4a4a4"/>
<rect x="639" y="282" width="1" height="17" fill="#a4a4a4"/>
<rect x="718" y="282" width="1" height="17" fill="#a4a4a4"/>
<rect x="797" y="282" width="1" height="17" fill="#a4a4a4"/>
<rect x="915" y="282" width="1" height="17" fill="#a4a4a4"/>
<rect x="993" y="282" width="1" height="17" fill="#a4a4a4"/>
<rect x="1160" y="282" width="1" height="17" fill="#a4a4a4"/>
<text x="13.5" y="294" font-size="11" fill="#000" textLength="43.4" lengthAdjust="spacingAndGlyphs" stroke="#000" stroke-width="0.12" clip-path="url(#c15)">DS LTDA.</text>
<text x="195.5" y="294" font-size="11" fill="#000" textLength="6.5" lengthAdjust="spacingAndGlyphs" stroke="#000" stroke-width="0.12">A</text>
<text x="447.5" y="294" font-size="11" fill="#000" text-anchor="end" textLength="38.1" lengthAdjust="spacingAndGlyphs" stroke="#000" stroke-width="0.12">4.000,00</text>
<text x="547.3" y="294" font-size="11" fill="#000" text-anchor="end" textLength="38.1" lengthAdjust="spacingAndGlyphs" stroke="#000" stroke-width="0.12">4.000,00</text>
<text x="799" y="294" font-size="11" fill="#000" textLength="52.8" lengthAdjust="spacingAndGlyphs" stroke="#000" stroke-width="0.12">01/10/2025</text>
<text x="918.5" y="294" font-size="11" fill="#000" textLength="38.1" lengthAdjust="spacingAndGlyphs" stroke="#000" stroke-width="0.12">13:14:58</text>
<text x="996.5" y="294" font-size="11" fill="#000" textLength="73.5" lengthAdjust="spacingAndGlyphs" stroke="#000" stroke-width="0.12">FER. SIGNORIN</text>
<text x="1163" y="294" font-size="11" fill="#000" textLength="32.7" lengthAdjust="spacingAndGlyphs" stroke="#000" stroke-width="0.12">000085</text>
<rect x="15" y="300" width="1216" height="17" fill="#dae8f5"/>
<rect x="5" y="300" width="9" height="16" fill="#aecaf0"/>
<rect x="5" y="300" width="9" height="1" fill="#d4e4fa"/>
<rect x="5" y="300" width="1" height="16" fill="#d4e4fa"/>
<rect x="5" y="316" width="9" height="1" fill="#141414"/>
<rect x="14" y="300" width="1" height="17" fill="#141414"/>
<rect x="15" y="316" width="1216" height="1" fill="#a4a4a4"/>
<rect x="192" y="300" width="1" height="16" fill="#a4a4a4"/>
<rect x="265" y="300" width="1" height="16" fill="#a4a4a4"/>
<rect x="353" y="300" width="1" height="16" fill="#a4a4a4"/>
<rect x="448" y="300" width="1" height="16" fill="#a4a4a4"/>
<rect x="548" y="300" width="1" height="16" fill="#a4a4a4"/>
<rect x="639" y="300" width="1" height="16" fill="#a4a4a4"/>
<rect x="718" y="300" width="1" height="16" fill="#a4a4a4"/>
<rect x="797" y="300" width="1" height="16" fill="#a4a4a4"/>
<rect x="915" y="300" width="1" height="16" fill="#a4a4a4"/>
<rect x="993" y="300" width="1" height="16" fill="#a4a4a4"/>
<rect x="1160" y="300" width="1" height="16" fill="#a4a4a4"/>
<text x="13.5" y="312" font-size="11" fill="#000" textLength="43.4" lengthAdjust="spacingAndGlyphs" stroke="#000" stroke-width="0.12" clip-path="url(#c15)">DS LTDA.</text>
<text x="195.5" y="312" font-size="11" fill="#000" textLength="6.5" lengthAdjust="spacingAndGlyphs" stroke="#000" stroke-width="0.12">A</text>
<text x="447.5" y="312" font-size="11" fill="#000" text-anchor="end" textLength="38.1" lengthAdjust="spacingAndGlyphs" stroke="#000" stroke-width="0.12">4.000,00</text>
<text x="547.3" y="312" font-size="11" fill="#000" text-anchor="end" textLength="38.1" lengthAdjust="spacingAndGlyphs" stroke="#000" stroke-width="0.12">4.000,00</text>
<text x="799" y="312" font-size="11" fill="#000" textLength="52.8" lengthAdjust="spacingAndGlyphs" stroke="#000" stroke-width="0.12">01/10/2025</text>
<text x="918.5" y="312" font-size="11" fill="#000" textLength="38.1" lengthAdjust="spacingAndGlyphs" stroke="#000" stroke-width="0.12">13:33:37</text>
<text x="996.5" y="312" font-size="11" fill="#000" textLength="73.5" lengthAdjust="spacingAndGlyphs" stroke="#000" stroke-width="0.12">FER. SIGNORIN</text>
<text x="1163" y="312" font-size="11" fill="#000" textLength="32.7" lengthAdjust="spacingAndGlyphs" stroke="#000" stroke-width="0.12">000139</text>
<rect x="15" y="317" width="1216" height="17" fill="#dae8f5"/>
<rect x="5" y="317" width="9" height="16" fill="#aecaf0"/>
<rect x="5" y="317" width="9" height="1" fill="#d4e4fa"/>
<rect x="5" y="317" width="1" height="16" fill="#d4e4fa"/>
<rect x="5" y="333" width="9" height="1" fill="#141414"/>
<rect x="14" y="317" width="1" height="17" fill="#141414"/>
<rect x="15" y="333" width="1216" height="1" fill="#a4a4a4"/>
<rect x="192" y="317" width="1" height="16" fill="#a4a4a4"/>
<rect x="265" y="317" width="1" height="16" fill="#a4a4a4"/>
<rect x="353" y="317" width="1" height="16" fill="#a4a4a4"/>
<rect x="448" y="317" width="1" height="16" fill="#a4a4a4"/>
<rect x="548" y="317" width="1" height="16" fill="#a4a4a4"/>
<rect x="639" y="317" width="1" height="16" fill="#a4a4a4"/>
<rect x="718" y="317" width="1" height="16" fill="#a4a4a4"/>
<rect x="797" y="317" width="1" height="16" fill="#a4a4a4"/>
<rect x="915" y="317" width="1" height="16" fill="#a4a4a4"/>
<rect x="993" y="317" width="1" height="16" fill="#a4a4a4"/>
<rect x="1160" y="317" width="1" height="16" fill="#a4a4a4"/>
<text x="195.5" y="329" font-size="11" fill="#000" textLength="6.5" lengthAdjust="spacingAndGlyphs" stroke="#000" stroke-width="0.12">A</text>
<text x="447.5" y="329" font-size="11" fill="#000" text-anchor="end" textLength="38.1" lengthAdjust="spacingAndGlyphs" stroke="#000" stroke-width="0.12">9.000,00</text>
<text x="547.3" y="329" font-size="11" fill="#000" text-anchor="end" textLength="38.1" lengthAdjust="spacingAndGlyphs" stroke="#000" stroke-width="0.12">8.900,00</text>
<text x="799" y="329" font-size="11" fill="#000" textLength="52.8" lengthAdjust="spacingAndGlyphs" stroke="#000" stroke-width="0.12">01/10/2025</text>
<text x="918.5" y="329" font-size="11" fill="#000" textLength="37.4" lengthAdjust="spacingAndGlyphs" stroke="#000" stroke-width="0.12">11:25:27</text>
<text x="996.5" y="329" font-size="11" fill="#000" textLength="97.5" lengthAdjust="spacingAndGlyphs" stroke="#000" stroke-width="0.12">CRISTINA FERREIRA</text>
<text x="1163" y="329" font-size="11" fill="#000" textLength="32.7" lengthAdjust="spacingAndGlyphs" stroke="#000" stroke-width="0.12">002538</text>
<rect x="15" y="334" width="1216" height="17" fill="#dae8f5"/>
<rect x="5" y="334" width="9" height="16" fill="#aecaf0"/>
<rect x="5" y="334" width="9" height="1" fill="#d4e4fa"/>
<rect x="5" y="334" width="1" height="16" fill="#d4e4fa"/>
<rect x="5" y="350" width="9" height="1" fill="#141414"/>
<rect x="14" y="334" width="1" height="17" fill="#141414"/>
<rect x="15" y="350" width="1216" height="1" fill="#a4a4a4"/>
<rect x="192" y="334" width="1" height="16" fill="#a4a4a4"/>
<rect x="265" y="334" width="1" height="16" fill="#a4a4a4"/>
<rect x="353" y="334" width="1" height="16" fill="#a4a4a4"/>
<rect x="448" y="334" width="1" height="16" fill="#a4a4a4"/>
<rect x="548" y="334" width="1" height="16" fill="#a4a4a4"/>
<rect x="639" y="334" width="1" height="16" fill="#a4a4a4"/>
<rect x="718" y="334" width="1" height="16" fill="#a4a4a4"/>
<rect x="797" y="334" width="1" height="16" fill="#a4a4a4"/>
<rect x="915" y="334" width="1" height="16" fill="#a4a4a4"/>
<rect x="993" y="334" width="1" height="16" fill="#a4a4a4"/>
<rect x="1160" y="334" width="1" height="16" fill="#a4a4a4"/>
<text x="195.5" y="346" font-size="11" fill="#000" textLength="6.5" lengthAdjust="spacingAndGlyphs" stroke="#000" stroke-width="0.12">A</text>
<text x="447.5" y="346" font-size="11" fill="#000" text-anchor="end" textLength="38.1" lengthAdjust="spacingAndGlyphs" stroke="#000" stroke-width="0.12">9.000,00</text>
<text x="547.3" y="346" font-size="11" fill="#000" text-anchor="end" textLength="38.1" lengthAdjust="spacingAndGlyphs" stroke="#000" stroke-width="0.12">8.900,00</text>
<text x="799" y="346" font-size="11" fill="#000" textLength="52.8" lengthAdjust="spacingAndGlyphs" stroke="#000" stroke-width="0.12">01/10/2025</text>
<text x="918.5" y="346" font-size="11" fill="#000" textLength="38.1" lengthAdjust="spacingAndGlyphs" stroke="#000" stroke-width="0.12">10:44:49</text>
<text x="996.5" y="346" font-size="11" fill="#000" textLength="97.5" lengthAdjust="spacingAndGlyphs" stroke="#000" stroke-width="0.12">CRISTINA FERREIRA</text>
<text x="1163" y="346" font-size="11" fill="#000" textLength="32.7" lengthAdjust="spacingAndGlyphs" stroke="#000" stroke-width="0.12">013612</text>
<rect x="15" y="351" width="1216" height="17" fill="#dae8f5"/>
<rect x="5" y="351" width="9" height="16" fill="#aecaf0"/>
<rect x="5" y="351" width="9" height="1" fill="#d4e4fa"/>
<rect x="5" y="351" width="1" height="16" fill="#d4e4fa"/>
<rect x="5" y="367" width="9" height="1" fill="#141414"/>
<rect x="14" y="351" width="1" height="17" fill="#141414"/>
<rect x="15" y="367" width="1216" height="1" fill="#a4a4a4"/>
<rect x="192" y="351" width="1" height="16" fill="#a4a4a4"/>
<rect x="265" y="351" width="1" height="16" fill="#a4a4a4"/>
<rect x="353" y="351" width="1" height="16" fill="#a4a4a4"/>
<rect x="448" y="351" width="1" height="16" fill="#a4a4a4"/>
<rect x="548" y="351" width="1" height="16" fill="#a4a4a4"/>
<rect x="639" y="351" width="1" height="16" fill="#a4a4a4"/>
<rect x="718" y="351" width="1" height="16" fill="#a4a4a4"/>
<rect x="797" y="351" width="1" height="16" fill="#a4a4a4"/>
<rect x="915" y="351" width="1" height="16" fill="#a4a4a4"/>
<rect x="993" y="351" width="1" height="16" fill="#a4a4a4"/>
<rect x="1160" y="351" width="1" height="16" fill="#a4a4a4"/>
<text x="195.5" y="363" font-size="11" fill="#000" textLength="6.5" lengthAdjust="spacingAndGlyphs" stroke="#000" stroke-width="0.12">A</text>
<text x="447.5" y="363" font-size="11" fill="#000" text-anchor="end" textLength="43.6" lengthAdjust="spacingAndGlyphs" stroke="#000" stroke-width="0.12">12.000,00</text>
<text x="547.3" y="363" font-size="11" fill="#000" text-anchor="end" textLength="42.9" lengthAdjust="spacingAndGlyphs" stroke="#000" stroke-width="0.12">11.900,00</text>
<text x="799" y="363" font-size="11" fill="#000" textLength="52.8" lengthAdjust="spacingAndGlyphs" stroke="#000" stroke-width="0.12">01/10/2025</text>
<text x="918.5" y="363" font-size="11" fill="#000" textLength="38.1" lengthAdjust="spacingAndGlyphs" stroke="#000" stroke-width="0.12">16:06:21</text>
<text x="996.5" y="363" font-size="11" fill="#000" textLength="73.5" lengthAdjust="spacingAndGlyphs" stroke="#000" stroke-width="0.12">FER. SIGNORIN</text>
<text x="1163" y="363" font-size="11" fill="#000" textLength="32.7" lengthAdjust="spacingAndGlyphs" stroke="#000" stroke-width="0.12">019917</text>
<rect x="15" y="368" width="1216" height="18" fill="#dae8f5"/>
<rect x="5" y="368" width="9" height="17" fill="#aecaf0"/>
<rect x="5" y="368" width="9" height="1" fill="#d4e4fa"/>
<rect x="5" y="368" width="1" height="17" fill="#d4e4fa"/>
<rect x="5" y="385" width="9" height="1" fill="#141414"/>
<rect x="14" y="368" width="1" height="18" fill="#141414"/>
<rect x="15" y="385" width="1216" height="1" fill="#a4a4a4"/>
<rect x="192" y="368" width="1" height="17" fill="#a4a4a4"/>
<rect x="265" y="368" width="1" height="17" fill="#a4a4a4"/>
<rect x="353" y="368" width="1" height="17" fill="#a4a4a4"/>
<rect x="448" y="368" width="1" height="17" fill="#a4a4a4"/>
<rect x="548" y="368" width="1" height="17" fill="#a4a4a4"/>
<rect x="639" y="368" width="1" height="17" fill="#a4a4a4"/>
<rect x="718" y="368" width="1" height="17" fill="#a4a4a4"/>
<rect x="797" y="368" width="1" height="17" fill="#a4a4a4"/>
<rect x="915" y="368" width="1" height="17" fill="#a4a4a4"/>
<rect x="993" y="368" width="1" height="17" fill="#a4a4a4"/>
<rect x="1160" y="368" width="1" height="17" fill="#a4a4a4"/>
<text x="195.5" y="380" font-size="11" fill="#000" textLength="6.5" lengthAdjust="spacingAndGlyphs" stroke="#000" stroke-width="0.12">A</text>
<text x="447.5" y="380" font-size="11" fill="#000" text-anchor="end" textLength="38.1" lengthAdjust="spacingAndGlyphs" stroke="#000" stroke-width="0.12">4.000,00</text>
<text x="547.3" y="380" font-size="11" fill="#000" text-anchor="end" textLength="38.1" lengthAdjust="spacingAndGlyphs" stroke="#000" stroke-width="0.12">3.950,00</text>
<text x="799" y="380" font-size="11" fill="#000" textLength="52.8" lengthAdjust="spacingAndGlyphs" stroke="#000" stroke-width="0.12">02/10/2025</text>
<text x="918.5" y="380" font-size="11" fill="#000" textLength="38.1" lengthAdjust="spacingAndGlyphs" stroke="#000" stroke-width="0.12">04:13:43</text>
<text x="996.5" y="380" font-size="11" fill="#000" textLength="97.5" lengthAdjust="spacingAndGlyphs" stroke="#000" stroke-width="0.12">CRISTINA FERREIRA</text>
<text x="1163" y="380" font-size="11" fill="#000" textLength="32.7" lengthAdjust="spacingAndGlyphs" stroke="#000" stroke-width="0.12">020835</text>
<rect x="15" y="386" width="1216" height="17" fill="#dae8f5"/>
<rect x="5" y="386" width="9" height="16" fill="#aecaf0"/>
<rect x="5" y="386" width="9" height="1" fill="#d4e4fa"/>
<rect x="5" y="386" width="1" height="16" fill="#d4e4fa"/>
<rect x="5" y="402" width="9" height="1" fill="#141414"/>
<rect x="14" y="386" width="1" height="17" fill="#141414"/>
<rect x="15" y="402" width="1216" height="1" fill="#a4a4a4"/>
<rect x="192" y="386" width="1" height="16" fill="#a4a4a4"/>
<rect x="265" y="386" width="1" height="16" fill="#a4a4a4"/>
<rect x="353" y="386" width="1" height="16" fill="#a4a4a4"/>
<rect x="448" y="386" width="1" height="16" fill="#a4a4a4"/>
<rect x="548" y="386" width="1" height="16" fill="#a4a4a4"/>
<rect x="639" y="386" width="1" height="16" fill="#a4a4a4"/>
<rect x="718" y="386" width="1" height="16" fill="#a4a4a4"/>
<rect x="797" y="386" width="1" height="16" fill="#a4a4a4"/>
<rect x="915" y="386" width="1" height="16" fill="#a4a4a4"/>
<rect x="993" y="386" width="1" height="16" fill="#a4a4a4"/>
<rect x="1160" y="386" width="1" height="16" fill="#a4a4a4"/>
<text x="195.5" y="398" font-size="11" fill="#000" textLength="6.5" lengthAdjust="spacingAndGlyphs" stroke="#000" stroke-width="0.12">A</text>
<text x="447.5" y="398" font-size="11" fill="#000" text-anchor="end" textLength="38.1" lengthAdjust="spacingAndGlyphs" stroke="#000" stroke-width="0.12">2.000,00</text>
<text x="547.3" y="398" font-size="11" fill="#000" text-anchor="end" textLength="38.1" lengthAdjust="spacingAndGlyphs" stroke="#000" stroke-width="0.12">2.000,00</text>
<text x="799" y="398" font-size="11" fill="#000" textLength="52.8" lengthAdjust="spacingAndGlyphs" stroke="#000" stroke-width="0.12">02/10/2025</text>
<text x="918.5" y="398" font-size="11" fill="#000" textLength="38.1" lengthAdjust="spacingAndGlyphs" stroke="#000" stroke-width="0.12">06:39:13</text>
<text x="996.5" y="398" font-size="11" fill="#000" textLength="97.5" lengthAdjust="spacingAndGlyphs" stroke="#000" stroke-width="0.12">CRISTINA FERREIRA</text>
<text x="1163" y="398" font-size="11" fill="#000" textLength="32.7" lengthAdjust="spacingAndGlyphs" stroke="#000" stroke-width="0.12">000048</text>
<rect x="15" y="403" width="1216" height="17" fill="#dae8f5"/>
<rect x="5" y="403" width="9" height="16" fill="#aecaf0"/>
<rect x="5" y="403" width="9" height="1" fill="#d4e4fa"/>
<rect x="5" y="403" width="1" height="16" fill="#d4e4fa"/>
<rect x="5" y="419" width="9" height="1" fill="#141414"/>
<rect x="14" y="403" width="1" height="17" fill="#141414"/>
<rect x="15" y="419" width="1216" height="1" fill="#a4a4a4"/>
<rect x="192" y="403" width="1" height="16" fill="#a4a4a4"/>
<rect x="265" y="403" width="1" height="16" fill="#a4a4a4"/>
<rect x="353" y="403" width="1" height="16" fill="#a4a4a4"/>
<rect x="448" y="403" width="1" height="16" fill="#a4a4a4"/>
<rect x="548" y="403" width="1" height="16" fill="#a4a4a4"/>
<rect x="639" y="403" width="1" height="16" fill="#a4a4a4"/>
<rect x="718" y="403" width="1" height="16" fill="#a4a4a4"/>
<rect x="797" y="403" width="1" height="16" fill="#a4a4a4"/>
<rect x="915" y="403" width="1" height="16" fill="#a4a4a4"/>
<rect x="993" y="403" width="1" height="16" fill="#a4a4a4"/>
<rect x="1160" y="403" width="1" height="16" fill="#a4a4a4"/>
<text x="195.5" y="415" font-size="11" fill="#000" textLength="6.5" lengthAdjust="spacingAndGlyphs" stroke="#000" stroke-width="0.12">A</text>
<text x="447.5" y="415" font-size="11" fill="#000" text-anchor="end" textLength="42.9" lengthAdjust="spacingAndGlyphs" stroke="#000" stroke-width="0.12">11.000,00</text>
<text x="547.3" y="415" font-size="11" fill="#000" text-anchor="end" textLength="42.9" lengthAdjust="spacingAndGlyphs" stroke="#000" stroke-width="0.12">11.000,00</text>
<text x="799" y="415" font-size="11" fill="#000" textLength="52.8" lengthAdjust="spacingAndGlyphs" stroke="#000" stroke-width="0.12">02/10/2025</text>
<text x="918.5" y="415" font-size="11" fill="#000" textLength="38.1" lengthAdjust="spacingAndGlyphs" stroke="#000" stroke-width="0.12">08:43:58</text>
<text x="996.5" y="415" font-size="11" fill="#000" textLength="97.5" lengthAdjust="spacingAndGlyphs" stroke="#000" stroke-width="0.12">CRISTINA FERREIRA</text>
<text x="1163" y="415" font-size="11" fill="#000" textLength="32.7" lengthAdjust="spacingAndGlyphs" stroke="#000" stroke-width="0.12">002565</text>
<rect x="15" y="420" width="1216" height="17" fill="#dae8f5"/>
<rect x="5" y="420" width="9" height="16" fill="#aecaf0"/>
<rect x="5" y="420" width="9" height="1" fill="#d4e4fa"/>
<rect x="5" y="420" width="1" height="16" fill="#d4e4fa"/>
<rect x="5" y="436" width="9" height="1" fill="#141414"/>
<rect x="14" y="420" width="1" height="17" fill="#141414"/>
<rect x="15" y="436" width="1216" height="1" fill="#a4a4a4"/>
<rect x="192" y="420" width="1" height="16" fill="#a4a4a4"/>
<rect x="265" y="420" width="1" height="16" fill="#a4a4a4"/>
<rect x="353" y="420" width="1" height="16" fill="#a4a4a4"/>
<rect x="448" y="420" width="1" height="16" fill="#a4a4a4"/>
<rect x="548" y="420" width="1" height="16" fill="#a4a4a4"/>
<rect x="639" y="420" width="1" height="16" fill="#a4a4a4"/>
<rect x="718" y="420" width="1" height="16" fill="#a4a4a4"/>
<rect x="797" y="420" width="1" height="16" fill="#a4a4a4"/>
<rect x="915" y="420" width="1" height="16" fill="#a4a4a4"/>
<rect x="993" y="420" width="1" height="16" fill="#a4a4a4"/>
<rect x="1160" y="420" width="1" height="16" fill="#a4a4a4"/>
<text x="195.5" y="432" font-size="11" fill="#000" textLength="6.5" lengthAdjust="spacingAndGlyphs" stroke="#000" stroke-width="0.12">A</text>
<text x="447.5" y="432" font-size="11" fill="#000" text-anchor="end" textLength="43.6" lengthAdjust="spacingAndGlyphs" stroke="#000" stroke-width="0.12">12.000,00</text>
<text x="547.3" y="432" font-size="11" fill="#000" text-anchor="end" textLength="42.9" lengthAdjust="spacingAndGlyphs" stroke="#000" stroke-width="0.12">11.000,00</text>
<text x="799" y="432" font-size="11" fill="#000" textLength="52.8" lengthAdjust="spacingAndGlyphs" stroke="#000" stroke-width="0.12">03/10/2025</text>
<text x="918.5" y="432" font-size="11" fill="#000" textLength="37.4" lengthAdjust="spacingAndGlyphs" stroke="#000" stroke-width="0.12">11:18:26</text>
<text x="996.5" y="432" font-size="11" fill="#000" textLength="97.5" lengthAdjust="spacingAndGlyphs" stroke="#000" stroke-width="0.12">CRISTINA FERREIRA</text>
<text x="1163" y="432" font-size="11" fill="#000" textLength="32.7" lengthAdjust="spacingAndGlyphs" stroke="#000" stroke-width="0.12">000546</text>
<rect x="15" y="437" width="1216" height="17" fill="#dae8f5"/>
<rect x="5" y="437" width="9" height="16" fill="#aecaf0"/>
<rect x="5" y="437" width="9" height="1" fill="#d4e4fa"/>
<rect x="5" y="437" width="1" height="16" fill="#d4e4fa"/>
<rect x="5" y="453" width="9" height="1" fill="#141414"/>
<rect x="14" y="437" width="1" height="17" fill="#141414"/>
<rect x="15" y="453" width="1216" height="1" fill="#a4a4a4"/>
<rect x="192" y="437" width="1" height="16" fill="#a4a4a4"/>
<rect x="265" y="437" width="1" height="16" fill="#a4a4a4"/>
<rect x="353" y="437" width="1" height="16" fill="#a4a4a4"/>
<rect x="448" y="437" width="1" height="16" fill="#a4a4a4"/>
<rect x="548" y="437" width="1" height="16" fill="#a4a4a4"/>
<rect x="639" y="437" width="1" height="16" fill="#a4a4a4"/>
<rect x="718" y="437" width="1" height="16" fill="#a4a4a4"/>
<rect x="797" y="437" width="1" height="16" fill="#a4a4a4"/>
<rect x="915" y="437" width="1" height="16" fill="#a4a4a4"/>
<rect x="993" y="437" width="1" height="16" fill="#a4a4a4"/>
<rect x="1160" y="437" width="1" height="16" fill="#a4a4a4"/>
<text x="195.5" y="449" font-size="11" fill="#000" textLength="6.5" lengthAdjust="spacingAndGlyphs" stroke="#000" stroke-width="0.12">A</text>
<text x="447.5" y="449" font-size="11" fill="#000" text-anchor="end" textLength="38.1" lengthAdjust="spacingAndGlyphs" stroke="#000" stroke-width="0.12">4.000,00</text>
<text x="547.3" y="449" font-size="11" fill="#000" text-anchor="end" textLength="38.1" lengthAdjust="spacingAndGlyphs" stroke="#000" stroke-width="0.12">4.030,00</text>
<text x="799" y="449" font-size="11" fill="#000" textLength="52.8" lengthAdjust="spacingAndGlyphs" stroke="#000" stroke-width="0.12">02/10/2025</text>
<text x="918.5" y="449" font-size="11" fill="#000" textLength="38.1" lengthAdjust="spacingAndGlyphs" stroke="#000" stroke-width="0.12">07:06:17</text>
<text x="996.5" y="449" font-size="11" fill="#000" textLength="97.5" lengthAdjust="spacingAndGlyphs" stroke="#000" stroke-width="0.12">CRISTINA FERREIRA</text>
<text x="1163" y="449" font-size="11" fill="#000" textLength="32.7" lengthAdjust="spacingAndGlyphs" stroke="#000" stroke-width="0.12">000029</text>
<rect x="15" y="454" width="1216" height="18" fill="#dae8f5"/>
<rect x="5" y="454" width="9" height="17" fill="#aecaf0"/>
<rect x="5" y="454" width="9" height="1" fill="#d4e4fa"/>
<rect x="5" y="454" width="1" height="17" fill="#d4e4fa"/>
<rect x="5" y="471" width="9" height="1" fill="#141414"/>
<rect x="14" y="454" width="1" height="18" fill="#141414"/>
<rect x="15" y="471" width="1216" height="1" fill="#a4a4a4"/>
<rect x="192" y="454" width="1" height="17" fill="#a4a4a4"/>
<rect x="265" y="454" width="1" height="17" fill="#a4a4a4"/>
<rect x="353" y="454" width="1" height="17" fill="#a4a4a4"/>
<rect x="448" y="454" width="1" height="17" fill="#a4a4a4"/>
<rect x="548" y="454" width="1" height="17" fill="#a4a4a4"/>
<rect x="639" y="454" width="1" height="17" fill="#a4a4a4"/>
<rect x="718" y="454" width="1" height="17" fill="#a4a4a4"/>
<rect x="797" y="454" width="1" height="17" fill="#a4a4a4"/>
<rect x="915" y="454" width="1" height="17" fill="#a4a4a4"/>
<rect x="993" y="454" width="1" height="17" fill="#a4a4a4"/>
<rect x="1160" y="454" width="1" height="17" fill="#a4a4a4"/>
<text x="195.5" y="466" font-size="11" fill="#000" textLength="6.5" lengthAdjust="spacingAndGlyphs" stroke="#000" stroke-width="0.12">A</text>
<text x="447.5" y="466" font-size="11" fill="#000" text-anchor="end" textLength="43.6" lengthAdjust="spacingAndGlyphs" stroke="#000" stroke-width="0.12">10.000,00</text>
<text x="547.3" y="466" font-size="11" fill="#000" text-anchor="end" textLength="43.6" lengthAdjust="spacingAndGlyphs" stroke="#000" stroke-width="0.12">10.000,00</text>
<text x="799" y="466" font-size="11" fill="#000" textLength="52.8" lengthAdjust="spacingAndGlyphs" stroke="#000" stroke-width="0.12">02/10/2025</text>
<text x="918.5" y="466" font-size="11" fill="#000" textLength="38.1" lengthAdjust="spacingAndGlyphs" stroke="#000" stroke-width="0.12">06:25:10</text>
<text x="996.5" y="466" font-size="11" fill="#000" textLength="97.5" lengthAdjust="spacingAndGlyphs" stroke="#000" stroke-width="0.12">CRISTINA FERREIRA</text>
<text x="1163" y="466" font-size="11" fill="#000" textLength="32.7" lengthAdjust="spacingAndGlyphs" stroke="#000" stroke-width="0.12">003122</text>
<rect x="15" y="472" width="1216" height="17" fill="#dae8f5"/>
<rect x="5" y="472" width="9" height="16" fill="#aecaf0"/>
<rect x="5" y="472" width="9" height="1" fill="#d4e4fa"/>
<rect x="5" y="472" width="1" height="16" fill="#d4e4fa"/>
<rect x="5" y="488" width="9" height="1" fill="#141414"/>
<rect x="14" y="472" width="1" height="17" fill="#141414"/>
<rect x="15" y="488" width="1216" height="1" fill="#a4a4a4"/>
<rect x="192" y="472" width="1" height="16" fill="#a4a4a4"/>
<rect x="265" y="472" width="1" height="16" fill="#a4a4a4"/>
<rect x="353" y="472" width="1" height="16" fill="#a4a4a4"/>
<rect x="448" y="472" width="1" height="16" fill="#a4a4a4"/>
<rect x="548" y="472" width="1" height="16" fill="#a4a4a4"/>
<rect x="639" y="472" width="1" height="16" fill="#a4a4a4"/>
<rect x="718" y="472" width="1" height="16" fill="#a4a4a4"/>
<rect x="797" y="472" width="1" height="16" fill="#a4a4a4"/>
<rect x="915" y="472" width="1" height="16" fill="#a4a4a4"/>
<rect x="993" y="472" width="1" height="16" fill="#a4a4a4"/>
<rect x="1160" y="472" width="1" height="16" fill="#a4a4a4"/>
<text x="195.5" y="484" font-size="11" fill="#000" textLength="6.5" lengthAdjust="spacingAndGlyphs" stroke="#000" stroke-width="0.12">A</text>
<text x="447.5" y="484" font-size="11" fill="#000" text-anchor="end" textLength="38.1" lengthAdjust="spacingAndGlyphs" stroke="#000" stroke-width="0.12">5.000,00</text>
<text x="547.3" y="484" font-size="11" fill="#000" text-anchor="end" textLength="38.1" lengthAdjust="spacingAndGlyphs" stroke="#000" stroke-width="0.12">5.010,00</text>
<text x="799" y="484" font-size="11" fill="#000" textLength="52.8" lengthAdjust="spacingAndGlyphs" stroke="#000" stroke-width="0.12">02/10/2025</text>
<text x="918.5" y="484" font-size="11" fill="#000" textLength="38.1" lengthAdjust="spacingAndGlyphs" stroke="#000" stroke-width="0.12">04:42:45</text>
<text x="996.5" y="484" font-size="11" fill="#000" textLength="97.5" lengthAdjust="spacingAndGlyphs" stroke="#000" stroke-width="0.12">CRISTINA FERREIRA</text>
<text x="1163" y="484" font-size="11" fill="#000" textLength="32.7" lengthAdjust="spacingAndGlyphs" stroke="#000" stroke-width="0.12">018969</text>
<rect x="15" y="489" width="1216" height="17" fill="#dae8f5"/>
<rect x="5" y="489" width="9" height="16" fill="#aecaf0"/>
<rect x="5" y="489" width="9" height="1" fill="#d4e4fa"/>
<rect x="5" y="489" width="1" height="16" fill="#d4e4fa"/>
<rect x="5" y="505" width="9" height="1" fill="#141414"/>
<rect x="14" y="489" width="1" height="17" fill="#141414"/>
<rect x="15" y="505" width="1216" height="1" fill="#a4a4a4"/>
<rect x="192" y="489" width="1" height="16" fill="#a4a4a4"/>
<rect x="265" y="489" width="1" height="16" fill="#a4a4a4"/>
<rect x="353" y="489" width="1" height="16" fill="#a4a4a4"/>
<rect x="448" y="489" width="1" height="16" fill="#a4a4a4"/>
<rect x="548" y="489" width="1" height="16" fill="#a4a4a4"/>
<rect x="639" y="489" width="1" height="16" fill="#a4a4a4"/>
<rect x="718" y="489" width="1" height="16" fill="#a4a4a4"/>
<rect x="797" y="489" width="1" height="16" fill="#a4a4a4"/>
<rect x="915" y="489" width="1" height="16" fill="#a4a4a4"/>
<rect x="993" y="489" width="1" height="16" fill="#a4a4a4"/>
<rect x="1160" y="489" width="1" height="16" fill="#a4a4a4"/>
<text x="195.5" y="501" font-size="11" fill="#000" textLength="6.5" lengthAdjust="spacingAndGlyphs" stroke="#000" stroke-width="0.12">A</text>
<text x="447.5" y="501" font-size="11" fill="#000" text-anchor="end" textLength="38.1" lengthAdjust="spacingAndGlyphs" stroke="#000" stroke-width="0.12">4.000,00</text>
<text x="547.3" y="501" font-size="11" fill="#000" text-anchor="end" textLength="38.1" lengthAdjust="spacingAndGlyphs" stroke="#000" stroke-width="0.12">4.000,00</text>
<text x="799" y="501" font-size="11" fill="#000" textLength="52.8" lengthAdjust="spacingAndGlyphs" stroke="#000" stroke-width="0.12">02/10/2025</text>
<text x="918.5" y="501" font-size="11" fill="#000" textLength="38.1" lengthAdjust="spacingAndGlyphs" stroke="#000" stroke-width="0.12">05:28:09</text>
<text x="996.5" y="501" font-size="11" fill="#000" textLength="97.5" lengthAdjust="spacingAndGlyphs" stroke="#000" stroke-width="0.12">CRISTINA FERREIRA</text>
<text x="1163" y="501" font-size="11" fill="#000" textLength="32.7" lengthAdjust="spacingAndGlyphs" stroke="#000" stroke-width="0.12">002943</text>
<rect x="15" y="506" width="1216" height="17" fill="#dae8f5"/>
<rect x="5" y="506" width="9" height="16" fill="#aecaf0"/>
<rect x="5" y="506" width="9" height="1" fill="#d4e4fa"/>
<rect x="5" y="506" width="1" height="16" fill="#d4e4fa"/>
<rect x="5" y="522" width="9" height="1" fill="#141414"/>
<rect x="14" y="506" width="1" height="17" fill="#141414"/>
<rect x="15" y="522" width="1216" height="1" fill="#a4a4a4"/>
<rect x="192" y="506" width="1" height="16" fill="#a4a4a4"/>
<rect x="265" y="506" width="1" height="16" fill="#a4a4a4"/>
<rect x="353" y="506" width="1" height="16" fill="#a4a4a4"/>
<rect x="448" y="506" width="1" height="16" fill="#a4a4a4"/>
<rect x="548" y="506" width="1" height="16" fill="#a4a4a4"/>
<rect x="639" y="506" width="1" height="16" fill="#a4a4a4"/>
<rect x="718" y="506" width="1" height="16" fill="#a4a4a4"/>
<rect x="797" y="506" width="1" height="16" fill="#a4a4a4"/>
<rect x="915" y="506" width="1" height="16" fill="#a4a4a4"/>
<rect x="993" y="506" width="1" height="16" fill="#a4a4a4"/>
<rect x="1160" y="506" width="1" height="16" fill="#a4a4a4"/>
<text x="195.5" y="518" font-size="11" fill="#000" textLength="6.5" lengthAdjust="spacingAndGlyphs" stroke="#000" stroke-width="0.12">A</text>
<text x="447.5" y="518" font-size="11" fill="#000" text-anchor="end" textLength="43.6" lengthAdjust="spacingAndGlyphs" stroke="#000" stroke-width="0.12">12.000,00</text>
<text x="547.3" y="518" font-size="11" fill="#000" text-anchor="end" textLength="42.9" lengthAdjust="spacingAndGlyphs" stroke="#000" stroke-width="0.12">11.900,00</text>
<text x="799" y="518" font-size="11" fill="#000" textLength="52.8" lengthAdjust="spacingAndGlyphs" stroke="#000" stroke-width="0.12">02/10/2025</text>
<text x="918.5" y="518" font-size="11" fill="#000" textLength="38.1" lengthAdjust="spacingAndGlyphs" stroke="#000" stroke-width="0.12">10:53:03</text>
<text x="996.5" y="518" font-size="11" fill="#000" textLength="97.5" lengthAdjust="spacingAndGlyphs" stroke="#000" stroke-width="0.12">CRISTINA FERREIRA</text>
<text x="1163" y="518" font-size="11" fill="#000" textLength="32.7" lengthAdjust="spacingAndGlyphs" stroke="#000" stroke-width="0.12">001213</text>
<rect x="4" y="523" width="1227" height="21" fill="#fdfde2"/>
<rect x="4" y="523" width="11" height="21" fill="#aecaf0"/>
<rect x="3" y="544" width="1229" height="1" fill="#c4c4c4"/>
<rect x="356" y="524" width="92" height="18" fill="#f8f8ea"/>
<rect x="356" y="524" width="92" height="1" fill="#a8a8a8"/>
<rect x="356" y="524" width="1" height="18" fill="#a8a8a8"/>
<rect x="356" y="541" width="92" height="1" fill="#d8d8d8"/>
<rect x="447" y="524" width="1" height="18" fill="#d8d8d8"/>
<text x="445.5" y="538" font-size="11" fill="#10107a" font-weight="bold" text-anchor="end" textLength="68.0" lengthAdjust="spacingAndGlyphs" stroke="#10107a" stroke-width="0.15">3.231.081,00</text>
<rect x="449" y="523" width="99" height="21" fill="#f8f048"/>
<rect x="449" y="523" width="99" height="1" fill="#f0b400"/>
<rect x="449" y="523" width="1" height="21" fill="#f0b400"/>
<rect x="449" y="543" width="99" height="1" fill="#f0b400"/>
<rect x="547" y="523" width="1" height="21" fill="#f0b400"/>
<rect x="450" y="524" width="97" height="1" fill="#f4c820"/>
<rect x="450" y="524" width="1" height="19" fill="#f4c820"/>
<rect x="450" y="542" width="97" height="1" fill="#f4c820"/>
<rect x="546" y="524" width="1" height="19" fill="#f4c820"/>
<text x="545.5" y="538" font-size="11" fill="#000" font-weight="bold" text-anchor="end" textLength="68.5" lengthAdjust="spacingAndGlyphs" stroke="#000" stroke-width="0.15">3.135.638,00</text>
<rect x="1231" y="196" width="1" height="349" fill="#b4acac"/>
<rect x="3" y="545" width="1229" height="23" fill="#f0f0f0"/>
<rect x="4" y="547" width="26" height="1" fill="#ffffff"/>
<rect x="4" y="547" width="1" height="20" fill="#ffffff"/>
<rect x="4" y="566" width="26" height="1" fill="#a0a0a0"/>
<rect x="29" y="547" width="1" height="20" fill="#a0a0a0"/>
<rect x="31" y="547" width="75" height="1" fill="#a8a8a8"/>
<rect x="31" y="547" width="1" height="20" fill="#a8a8a8"/>
<rect x="31" y="566" width="75" height="1" fill="#ffffff"/>
<rect x="105" y="547" width="1" height="20" fill="#ffffff"/>
<rect x="108" y="547" width="95" height="1" fill="#a8a8a8"/>
<rect x="108" y="547" width="1" height="20" fill="#a8a8a8"/>
<rect x="108" y="566" width="95" height="1" fill="#ffffff"/>
<rect x="202" y="547" width="1" height="20" fill="#ffffff"/>
<rect x="205" y="547" width="402" height="1" fill="#a8a8a8"/>
<rect x="205" y="547" width="1" height="20" fill="#a8a8a8"/>
<rect x="205" y="566" width="402" height="1" fill="#ffffff"/>
<rect x="606" y="547" width="1" height="20" fill="#ffffff"/>
<rect x="607" y="547" width="63" height="1" fill="#a8a8a8"/>
<rect x="607" y="547" width="1" height="20" fill="#a8a8a8"/>
<rect x="607" y="566" width="63" height="1" fill="#ffffff"/>
<rect x="669" y="547" width="1" height="20" fill="#ffffff"/>
<rect x="673" y="547" width="23" height="1" fill="#a8a8a8"/>
<rect x="673" y="547" width="1" height="20" fill="#a8a8a8"/>
<rect x="673" y="566" width="23" height="1" fill="#ffffff"/>
<rect x="695" y="547" width="1" height="20" fill="#ffffff"/>
<rect x="698" y="547" width="25" height="1" fill="#a8a8a8"/>
<rect x="698" y="547" width="1" height="20" fill="#a8a8a8"/>
<rect x="698" y="566" width="25" height="1" fill="#ffffff"/>
<rect x="722" y="547" width="1" height="20" fill="#ffffff"/>
<rect x="725" y="547" width="25" height="1" fill="#a8a8a8"/>
<rect x="725" y="547" width="1" height="20" fill="#a8a8a8"/>
<rect x="725" y="566" width="25" height="1" fill="#ffffff"/>
<rect x="749" y="547" width="1" height="20" fill="#ffffff"/>
<rect x="753" y="547" width="92" height="1" fill="#a8a8a8"/>
<rect x="753" y="547" width="1" height="20" fill="#a8a8a8"/>
<rect x="753" y="566" width="92" height="1" fill="#ffffff"/>
<rect x="844" y="547" width="1" height="20" fill="#ffffff"/>
<rect x="847" y="547" width="384" height="1" fill="#a8a8a8"/>
<rect x="847" y="547" width="1" height="20" fill="#a8a8a8"/>
<rect x="847" y="566" width="384" height="1" fill="#ffffff"/>
<rect x="1230" y="547" width="1" height="20" fill="#ffffff"/>
<rect x="8" y="553" width="15" height="8" fill="#7e7e7e"/>
<rect x="9" y="554" width="13" height="2" fill="#9a9a9a"/>
<path d="M9 554 L12.2 557 L9 560 Z" fill="#d0d0d0"/>
<text x="35.5" y="561" font-size="11" fill="#7a7a7a" font-weight="bold" textLength="66.0" lengthAdjust="spacingAndGlyphs" stroke="#7a7a7a" stroke-width="0.15">Seleção OFF</text>
<text x="676.5" y="561" font-size="11" fill="#a8a8a8" textLength="17.0" lengthAdjust="spacingAndGlyphs">abc</text>
<text x="701.5" y="561" font-size="11" fill="#000" textLength="20.0" lengthAdjust="spacingAndGlyphs">0...9</text>
<text x="729.5" y="561" font-size="11" fill="#a8a8a8" textLength="16.5" lengthAdjust="spacingAndGlyphs">INS</text>
<text x="764.5" y="561" font-size="11" fill="#000" font-weight="bold" textLength="71.0" lengthAdjust="spacingAndGlyphs" stroke="#000" stroke-width="0.2">711 Registros</text>
<rect x="892.5" y="553.3" width="1.8" height="8" fill="#888"/>
<path d="M895.2 557.3 L903 553.3 L903 561.5 Z" fill="url(#gNavG)"/>
<path d="M988 557.3 L996.3 553.3 L996.3 561.5 Z" fill="url(#gNavG)"/>
<path d="M1083 553.2 L1090.8 557.4 L1083 561.7 Z" fill="url(#gNavB)"/>
<path d="M1177 553.2 L1184.8 557.4 L1177 561.7 Z" fill="url(#gNavB)"/>
<rect x="1185.3" y="553.2" width="2" height="8.5" fill="#1050d0"/>
<rect x="3" y="568" width="1230" height="1" fill="#10c4f0"/>
<rect x="1232" y="545" width="1" height="24" fill="#10c4f0"/>
<rect x="3" y="569" width="1230" height="1" fill="#1a1a1a"/>
<rect x="1" y="570" width="1236" height="21" fill="#f0f0f0"/>
<rect x="1" y="591" width="1236" height="2" fill="#141414"/>
<rect x="1" y="570" width="1236" height="1" fill="#fafafa"/>
<rect x="2" y="572" width="118" height="1" fill="#ffffff"/>
<rect x="2" y="572" width="1" height="19" fill="#ffffff"/>
<rect x="2" y="590" width="118" height="1" fill="#a8a8a8"/>
<rect x="119" y="572" width="1" height="19" fill="#a8a8a8"/>
<text x="5.2" y="586" font-size="11" fill="#383838" textLength="107.5" lengthAdjust="spacingAndGlyphs" stroke="#383838" stroke-width="0.22">16/12/2025 Dez/2025</text>
<rect x="121" y="572" width="1" height="19" fill="#d0d0d0"/>
<path d="M125.8 582 L125.8 579.5 Q125.8 574 132.2 574 Q138.6 574 138.6 579.5 L138.6 582" fill="none" stroke="#3e464e" stroke-width="1.3"/>
<rect x="123.9" y="579.9" width="3.4" height="6.8" rx="1.5" fill="#3e464e"/>
<rect x="136.4" y="579.9" width="3.4" height="6.8" rx="1.5" fill="#3e464e"/>
<path d="M138.4 586.5 Q138 589.3 133.5 589.4" fill="none" stroke="#3e464e" stroke-width="1.2"/>
<circle cx="132.6" cy="589.4" r="1.1" fill="#3e464e"/>
<text x="147.8" y="587.6" font-size="14.5" fill="#1a1a1a" textLength="14.0" lengthAdjust="spacingAndGlyphs">@</text>
<rect x="172" y="577.2" width="11" height="10.6" rx="2.2" fill="none" stroke="#000" stroke-width="2"/>
<circle cx="177.4" cy="582.8" r="2.6" fill="none" stroke="#000" stroke-width="1.6"/>
<circle cx="181" cy="579" r="0.8" fill="#000"/>
<rect x="172" y="577" width="11" height="2.6" fill="#000" shape-rendering="crispEdges"/>
<circle cx="180.8" cy="578.6" r="0.9" fill="#fff"/>
<text x="193.3" y="588.4" font-size="15.5" fill="#000" font-weight="bold" textLength="13.5" lengthAdjust="spacingAndGlyphs">in</text>
<rect x="215.6" y="577" width="14.4" height="10.5" rx="3" fill="#000"/><path d="M220.8 579.4 L225.8 582.2 L220.8 585 Z" fill="#fff"/>
<rect x="237.2" y="574.3" width="16.5" height="16" rx="1.8" fill="#1e1e1e"/>
<path d="M241.5 578 L244.2 578 L249.5 586.6 L246.8 586.6 Z" fill="none" stroke="#d8d8d8" stroke-width="0.8"/><path d="M249 578 L242 586.6" stroke="#d8d8d8" stroke-width="0.9"/>
<rect x="262" y="576" width="12.4" height="12.5" rx="1" fill="#000"/>
<path d="M270.2 588.5 L270.2 582 Q270.2 579.5 272.5 579.5 L273.6 579.5 M267.8 582.7 L273.4 582.7" fill="none" stroke="#fff" stroke-width="1.7"/>
<path d="M283.7 580.3 L285.6 577 L291.5 577 L289.5 580.3 Z" fill="#86e010"/>
<path d="M289.5 577 L296.1 577 L292.5 586 L290.3 580.5 Z" fill="#1a7ae8"/>
<path d="M302.8 580.3 L313.4 574.6 L323.7 580.3 L313.4 585 Z" fill="#f4f4f4" stroke="#1a1a1a" stroke-width="1.1" stroke-linejoin="round"/>
<ellipse cx="313.3" cy="582.8" rx="6" ry="2.2" fill="#c8c8c8" stroke="#1a1a1a" stroke-width="1.2"/>
<path d="M304.6 580.8 L304.6 589.5" stroke="#1a1a1a" stroke-width="1"/><circle cx="304.6" cy="589.4" r="1" fill="#1a1a1a"/>
<rect x="325" y="572" width="1" height="19" fill="#d8d8d8"/>
<text x="328" y="585.5" font-size="11" fill="#000" textLength="84.0" lengthAdjust="spacingAndGlyphs" stroke="#000" stroke-width="0.22">Teorema Sistemas</text>
<rect x="328" y="587" width="84" height="1" fill="#000"/>
<rect x="414" y="572" width="1" height="19" fill="#a8a8a8"/>
<rect x="415" y="572" width="1" height="19" fill="#ffffff"/>
<text x="423.5" y="586" font-size="11" fill="#505050" textLength="173.0" lengthAdjust="spacingAndGlyphs" stroke="#505050" stroke-width="0.2">Produção Industrial - v.25.08a11.16a</text>
<rect x="610" y="572" width="1" height="19" fill="#a8a8a8"/>
<rect x="611" y="572" width="1" height="19" fill="#ffffff"/>
<text x="815" y="586" font-size="11" fill="#404040" textLength="154.0" lengthAdjust="spacingAndGlyphs" stroke="#404040" stroke-width="0.2">0001 RACOES SERTANEJA LTDA</text>
<rect x="1175" y="572" width="1" height="19" fill="#a8a8a8"/>
<rect x="1176" y="572" width="1" height="19" fill="#ffffff"/>
<text x="1179.5" y="586" font-size="11" fill="#404040" textLength="67.0" lengthAdjust="spacingAndGlyphs" stroke="#404040" stroke-width="0.2">Reg: RACOES</text>
<rect x="1237" y="0" width="3" height="593" fill="#000"/>
<path d="M1237 497 L1217 497 L1214 500 L1214 530.7 L1237 543.2 Z" fill="#5a5a5a"/>
<rect x="1219.8" y="505.7" width="14.2" height="14.2" rx="2" fill="#080c24"/>
<circle cx="1226.9" cy="512.8" r="5.6" fill="#585e6a"/>
<path d="M1222.6 512.8 L1225 510.8 L1225 512.1 L1228.8 512.1 L1228.8 510.8 L1231.2 512.8 L1228.8 514.8 L1228.8 513.5 L1225 513.5 L1225 514.8 Z" fill="#080c24"/>
</svg></body></html>
